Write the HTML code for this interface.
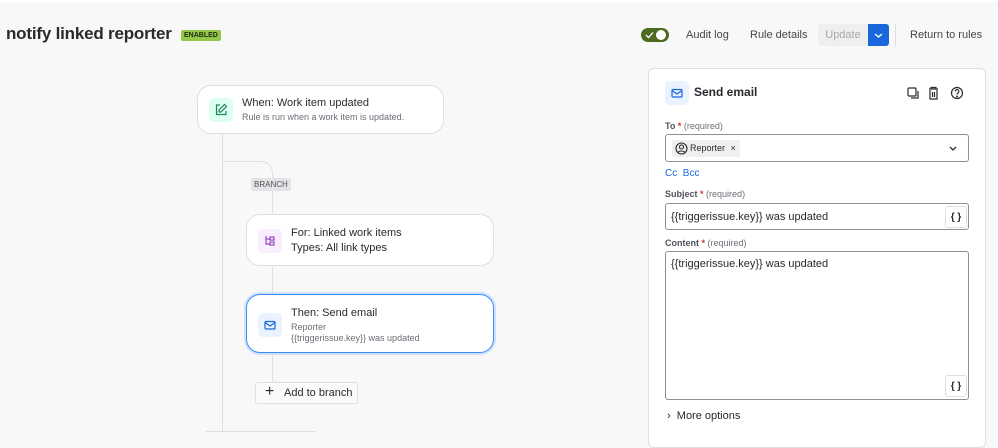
<!DOCTYPE html>
<html><head><style>
*{box-sizing:border-box;margin:0;padding:0}
body{width:998px;height:432px;overflow:hidden;background:#f8f8f8;font-family:"Liberation Sans",sans-serif;color:#292a2e;position:relative}
.a{position:absolute}
.card{position:absolute;background:#fff;border:1px solid #dcdfe4;border-radius:14px}
.ic{position:absolute;width:24px;height:24px;border-radius:5px;display:flex;align-items:center;justify-content:center}
.t{font-size:11px;white-space:nowrap}
.s{font-size:9px;color:#6b6e76;white-space:nowrap}
.line{position:absolute;background:#dcdfe4}
.lbl{font-size:9px;font-weight:bold;color:#505258}
.lbl span{color:#c9372c}.lbl i{font-style:normal;font-weight:normal;color:#6b6e76}
.inp{position:absolute;border:1px solid #8c8f97;border-radius:3px;background:#fff;font-size:11px}
.br{position:absolute;width:22px;height:22px;border:1px solid #dcdfe4;border-radius:3px;font-size:10px;display:flex;align-items:center;justify-content:center;font-weight:bold}
</style></head><body>
<div class="a" style="left:0;top:0;width:998px;height:2px;background:#fff"></div>
<div class="a" style="left:6px;top:24px;font-size:17px;font-weight:bold;letter-spacing:-0.2px;white-space:nowrap">notify linked reporter</div>
<div class="a" style="left:181px;top:30px;height:11px;padding:0 3px;background:#94c748;border-radius:2px;font-size:7px;font-weight:bold;line-height:11px;color:#1f2a10">ENABLED</div>

<div class="a" style="left:641px;top:28px;width:28px;height:14px;border-radius:7px;background:#4c6b1f"><div class="a" style="left:15px;top:2px;width:10px;height:10px;border-radius:5px;background:#fff"></div><svg class="a" style="left:4px;top:3px" width="9" height="8"><path d="M1 4l2.5 2.5L8 1.5" stroke="#fff" stroke-width="1.3" fill="none"/></svg></div>
<div class="a t" style="left:686px;top:29px;font-size:11px;color:#44464c">Audit log</div>
<div class="a t" style="left:750px;top:29px;font-size:11px;color:#44464c">Rule details</div>
<div class="a" style="left:818px;top:24px;width:50px;height:22px;background:#efefef;border-radius:3px;color:#a5a7ad;font-size:11px;line-height:22px;text-align:center">Update</div>
<div class="a" style="left:868px;top:24px;width:21px;height:22px;background:#1868db;border-radius:0 3px 3px 0"><svg width="21" height="22"><path d="M7 10l3.5 3 3.5-3" stroke="#fff" stroke-width="1.4" fill="none"/></svg></div>
<div class="line" style="left:895px;top:24px;width:1px;height:22px"></div>
<div class="a t" style="left:910px;top:29px;font-size:11px;color:#44464c">Return to rules</div>

<div class="line" style="left:222px;top:133px;width:1px;height:299px"></div>
<div class="a" style="left:222px;top:161px;width:51px;height:40px;border-top:1px solid #dcdfe4;border-right:1px solid #dcdfe4;border-top-right-radius:12px"></div>
<div class="a" style="left:251px;top:178px;height:13px;padding:0 3px;background:#e3e4e6;border-radius:2px;font-size:8px;line-height:13px;color:#505258">BRANCH</div>
<div class="line" style="left:272px;top:191px;width:1px;height:200px"></div>
<div class="line" style="left:206px;top:431px;width:110px;height:1px"></div>

<div class="card" style="left:197px;top:85px;width:247px;height:49px">
<div class="ic" style="left:11px;top:12px;background:#dcfff1"><svg width="14" height="14" viewBox="0 0 14 14" fill="none" stroke="#1f845a" stroke-width="1.2"><path d="M6 2H2.5v9.5H12V8"/><path d="M10.5 1.5l2 2L7 9H5V7z"/></svg></div>
<div class="a t" style="left:44px;top:11px">When: Work item updated</div>
<div class="a s" style="left:44px;top:26px">Rule is run when a work item is updated.</div></div>

<div class="card" style="left:246px;top:214px;width:248px;height:52px">
<div class="ic" style="left:11px;top:14px;background:#f8eefe"><svg width="14" height="14" viewBox="0 0 14 14" fill="none" stroke="#964ac0" stroke-width="1.2"><path d="M3 2v8h4M3 5h4"/><rect x="7" y="3" width="4" height="3"/><rect x="7" y="8" width="4" height="3"/></svg></div>
<div class="a t" style="left:44px;top:12px">For: Linked work items</div>
<div class="a t" style="left:44px;top:27px">Types: All link types</div></div>

<div class="a" style="left:244px;top:292px;width:252px;height:63px;border:2px solid #cfe1fd;border-radius:16px"></div>
<div class="card" style="left:246px;top:294px;width:248px;height:59px;border:1.5px solid #388bff">
<div class="ic" style="left:11px;top:18px;background:#e9f2fe"><svg width="14" height="14" viewBox="0 0 14 14" fill="none" stroke="#1868db" stroke-width="1.2"><rect x="2" y="3.5" width="10" height="7.5" rx="1"/><path d="M2 4.5l5 3.5 5-3.5"/></svg></div>
<div class="a t" style="left:44px;top:12px">Then: Send email</div>
<div class="a s" style="left:44px;top:27px">Reporter</div>
<div class="a s" style="left:44px;top:38px">{{triggerissue.key}} was updated</div></div>

<div class="a" style="left:255px;top:382px;width:103px;height:22px;border:1px solid #dcdfe4;border-radius:3px;background:#fafafa;font-size:11px;line-height:20px;padding-left:28px">Add to branch<div class="a" style="left:9px;top:-1px;font-size:16px;font-weight:300">+</div></div>

<div class="a" style="left:648px;top:68px;width:338px;height:380px;background:#fff;border:1px solid #dcdfe4;border-radius:6px">
<div class="ic" style="left:16px;top:12px;background:#e9f2fe"><svg width="14" height="14" viewBox="0 0 14 14" fill="none" stroke="#1868db" stroke-width="1.2"><rect x="2" y="3.5" width="10" height="7.5" rx="1"/><path d="M2 4.5l5 3.5 5-3.5"/></svg></div>
<div class="a" style="left:45px;top:16px;font-size:12px;font-weight:bold">Send email</div>
<svg class="a" style="left:258px;top:17px" width="60" height="14" fill="none" stroke="#292a2e" stroke-width="1.2"><rect x="1" y="2" width="8" height="8" rx="1"/><path d="M4 12h7V5"/><path d="M22 3h9M24 3V1.5h5V3M23 4v9h7V4M25.5 6v5M27.5 6v5"/><circle cx="50" cy="7" r="5.5"/><path d="M48.3 5.5a1.8 1.8 0 113 1.2c-.8.5-1.3.8-1.3 1.8"/><circle cx="50" cy="10.5" r=".4" fill="#292a2e"/></svg>
<div class="a lbl" style="left:16px;top:52px">To <span>*</span> <i>(required)</i></div>
<div class="inp" style="left:16px;top:65px;width:304px;height:28px">
<div class="a" style="left:6px;top:5px;height:17px;width:68px;background:#efefef;border-radius:2px;font-size:9px;line-height:17px;padding-left:18px">Reporter <span style="margin-left:3px">×</span><svg class="a" style="left:3px;top:2px" width="13" height="13" fill="none" stroke="#292a2e" stroke-width="1.1"><circle cx="6.5" cy="6.5" r="5.5"/><circle cx="6.5" cy="5" r="2"/><path d="M3 10.5c1-2 6-2 7 0"/></svg></div>
<svg class="a" style="left:282px;top:10px" width="10" height="8"><path d="M2 2l3 3 3-3" stroke="#292a2e" stroke-width="1.3" fill="none"/></svg></div>
<div class="a" style="left:16px;top:99px;font-size:10px;color:#1868db">Cc&nbsp;&nbsp;Bcc</div>
<div class="a lbl" style="left:16px;top:120px">Subject <span>*</span> <i>(required)</i></div>
<div class="inp" style="left:16px;top:134px;width:304px;height:27px;padding:7px 5px">{{triggerissue.key}} was updated<div class="br" style="left:279px;top:2px">{ }</div></div>
<div class="a lbl" style="left:16px;top:169px">Content <span>*</span> <i>(required)</i></div>
<div class="inp" style="left:16px;top:182px;width:304px;height:149px;padding:6px 5px">{{triggerissue.key}} was updated<div class="br" style="left:279px;top:123px">{ }</div></div>
<div class="a" style="left:18px;top:341px;font-size:11px">›&nbsp; More options</div>
</div>
</body></html>
